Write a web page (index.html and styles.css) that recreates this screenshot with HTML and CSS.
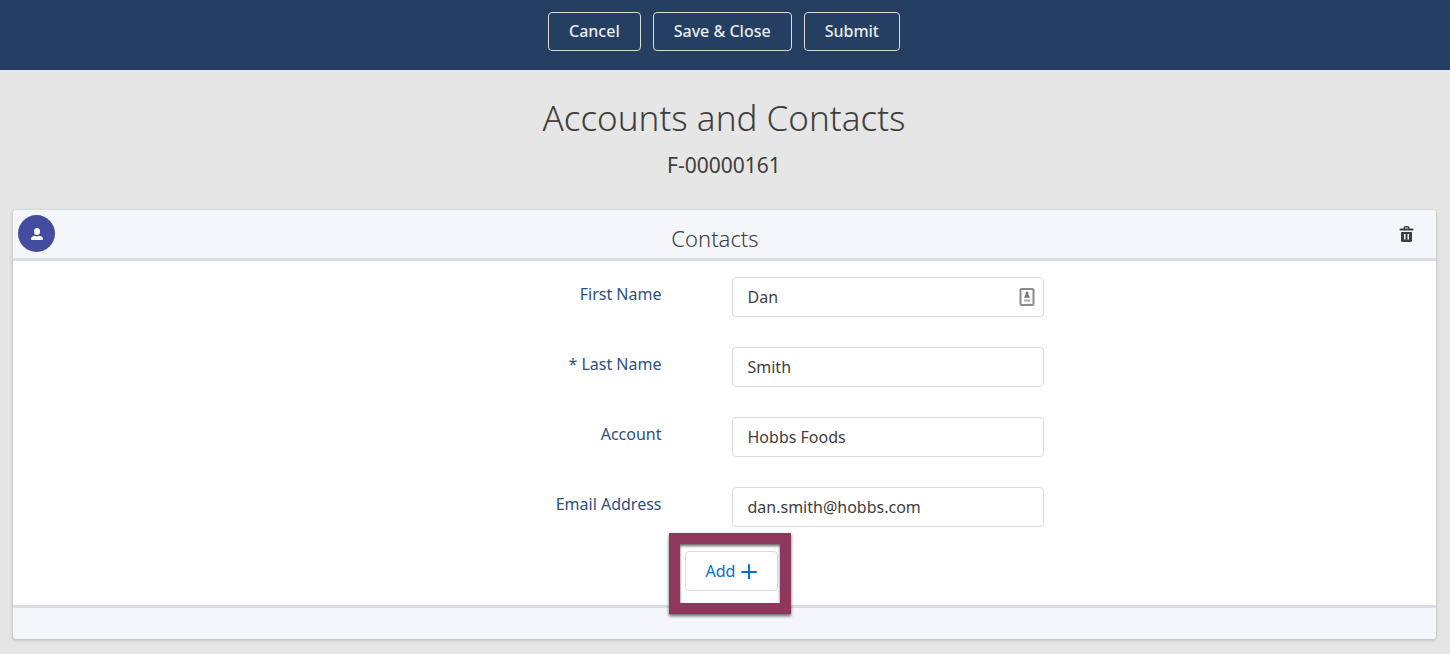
FILE: index.html
```html
<!DOCTYPE html>
<html lang="en">
<head>
    <meta charset="UTF-8">
    <meta name="viewport" content="width=device-width, initial-scale=1.0">
    <title>Accounts and Contacts</title>
    <link rel="stylesheet" href="styles.css">
</head>
<body>
    <header class="toolbar">
        <button type="button" class="toolbar-btn">Cancel</button>
        <button type="submit" form="contact-form" class="toolbar-btn">Save &amp; Close</button>
        <button type="submit" form="contact-form" class="toolbar-btn">Submit</button>
    </header>

    <main>
        <div class="page-title">
            <h1>Accounts and Contacts</h1>
            <p>F-00000161</p>
        </div>

        <section class="card">
            <div class="card-header">
                <span class="card-icon">
                    <svg viewBox="0 0 14 14" width="14" height="14" aria-hidden="true">
                        <ellipse cx="7" cy="4.500" rx="3" ry="3.600"/>
                        <path d="M1 12.200c0-2.300 1.600-3.100 3.700-3.500C5.300 9.100 6.100 9.400 7 9.400s1.700-.3 2.300-.7c2.100.4 3.700 1.200 3.700 3.500 0 .5-.3.800-.8.800H1.800c-.5 0-.8-.3-.8-.8z"/>
                    </svg>
                </span>
                <h2>Contacts</h2>
                <div class="card-actions">
                    <button type="button" class="delete-btn" aria-label="Delete">
                        <svg viewBox="0 0 15 18" width="15" height="18" aria-hidden="true">
                            <path d="M5.200 4V3c0-.8.6-1.300 1.300-1.300h2c.7 0 1.300.5 1.300 1.300v1" fill="none" stroke="#3e3e3c" stroke-width="1.500"/>
                            <rect x="0.500" y="3.600" width="14" height="2" rx="0.800"/>
                            <path fill-rule="evenodd" d="M2 7h11v8.500c0 .8-.7 1.500-1.500 1.500h-8C2.700 17 2 16.300 2 15.500zM5 9v5.500h1.500V9zm3.500 0v5.500H10V9z"/>
                        </svg>
                    </button>
                </div>
            </div>

            <form id="contact-form" class="card-body">
                <div class="form-row">
                    <label for="first-name">First Name</label>
                    <div class="field">
                        <input type="text" id="first-name" value="Dan">
                        <svg class="autofill" viewBox="0 0 16 20" width="16" height="20" aria-hidden="true">
                            <rect x="1.500" y="2" width="13" height="16" rx="1" fill="#fff" stroke="#8c8c8c" stroke-width="2"/>
                            <circle cx="8" cy="6" r="1.500" fill="#777"/>
                            <path d="M6.800 7h2.400l1.800 3.800H5z" fill="#777"/>
                            <path d="M5 13.500h6" stroke="#aaa" stroke-width="2"/>
                        </svg>
                    </div>
                </div>
                <div class="form-row">
                    <label for="last-name">* Last Name</label>
                    <div class="field">
                        <input type="text" id="last-name" value="Smith" required>
                    </div>
                </div>
                <div class="form-row">
                    <label for="account">Account</label>
                    <div class="field">
                        <input type="text" id="account" value="Hobbs Foods">
                    </div>
                </div>
                <div class="form-row">
                    <label for="email">Email Address</label>
                    <div class="field">
                        <input type="email" id="email" value="dan.smith@hobbs.com">
                    </div>
                </div>
                <div class="add-row">
                    <div class="highlight">
                        <button type="button" class="add-btn">
                            Add
                            <svg viewBox="0 0 16 16" width="16" height="16" aria-hidden="true">
                                <path d="M8 2v14M1 9h14" fill="none" stroke="#0070d2" stroke-width="2" stroke-linecap="round"/>
                            </svg>
                        </button>
                    </div>
                </div>
            </form>

            <div class="card-footer"></div>
        </section>
    </main>
</body>
</html>
```
FILE: styles.css
```css
* {
    margin: 0;
    padding: 0;
    box-sizing: border-box;
}

body {
    font-family: 'Noto Sans', 'Open Sans', sans-serif;
    font-size: 16px;
    line-height: 24px;
    background: #e6e6e6;
    color: #3e3e3c;
}

button,
input {
    font: inherit;
}

button {
    cursor: pointer;
}

/* top bar */
.toolbar {
    display: flex;
    justify-content: center;
    gap: 12px;
    padding: 12px 14px 19px 12px;
    background: #253f63;
}

.toolbar-btn {
    height: 39px;
    padding: 0 20px 2px;
    background: transparent;
    border: 1px solid #dddbda;
    border-radius: 4px;
    color: #ecebea;
    font-weight: 500;
}

.page-title {
    padding: 24px 14px 28px 12px;
    text-align: center;
}

.page-title h1 {
    font-size: 35px;
    line-height: 48px;
    font-weight: 300;
}

.page-title p {
    margin-top: 8px;
    padding-bottom: 2px;
    font-size: 21px;
    line-height: 30px;
}

/* contacts card */
.card {
    margin: 0 14px 14px 13px;
    background: #fff;
    border-radius: 4px;
    box-shadow: 0 1px 3px 1px rgba(0, 0, 0, 0.15);
}

.card-header {
    display: flex;
    align-items: center;
    height: 51px;
    padding: 0 0 1px 5px;
    background: #f4f6fa;
    border-bottom: 3px solid #d8dde6;
    border-radius: 4px 4px 0 0;
}

.card-icon {
    display: flex;
    align-items: center;
    justify-content: center;
    width: 37px;
    height: 37px;
    border-radius: 50%;
    background: #444c9f;
    fill: #fff;
}

.card-header h2 {
    flex: 1;
    padding-top: 8px;
    font-size: 22px;
    line-height: 32px;
    font-weight: 300;
    text-align: center;
}

.card-actions {
    width: 61px;
    padding-left: 24px;
}

.delete-btn {
    display: block;
    background: none;
    border: none;
    fill: #3e3e3c;
}

.delete-btn svg {
    display: block;
}

.card-body {
    padding: 16px 0 14px;
}

.form-row {
    display: grid;
    grid-template-columns: 1fr 1fr;
    margin-bottom: 30px;
}

.form-row label {
    padding: 5px 63px 0 12px;
    color: #2f4f7d;
    text-align: right;
}

.field {
    position: relative;
    width: 319px;
    padding-left: 7px;
}

.field input {
    display: block;
    width: 100%;
    height: 40px;
    padding: 0 15px;
    background: #fff;
    border: 1px solid #dddbda;
    border-radius: 4px;
    color: #3e3e3c;
}

.autofill {
    position: absolute;
    top: 10px;
    right: 9px;
}

.add-row {
    display: flex;
    justify-content: center;
    margin-top: -6px;
    padding-left: 14px;
}

.highlight {
    position: relative;
}

/* frame drawn around the add button */
.highlight::after {
    content: '';
    position: absolute;
    top: -18px;
    right: -13px;
    bottom: -23px;
    left: -16px;
    border: 11px solid #8e385e;
    box-shadow: 0 2px 3px rgba(0, 0, 0, 0.6), inset 0 2px 3px rgba(0, 0, 0, 0.6);
    pointer-events: none;
}

.add-btn {
    display: flex;
    align-items: center;
    gap: 6px;
    height: 40px;
    padding: 0 20px;
    background: #fff;
    border: 1px solid #dddbda;
    border-radius: 4px;
    color: #0070d2;
}

.card-footer {
    height: 34px;
    background: #f4f6fa;
    border-top: 3px solid #d8dde6;
    border-radius: 0 0 4px 4px;
}
```
